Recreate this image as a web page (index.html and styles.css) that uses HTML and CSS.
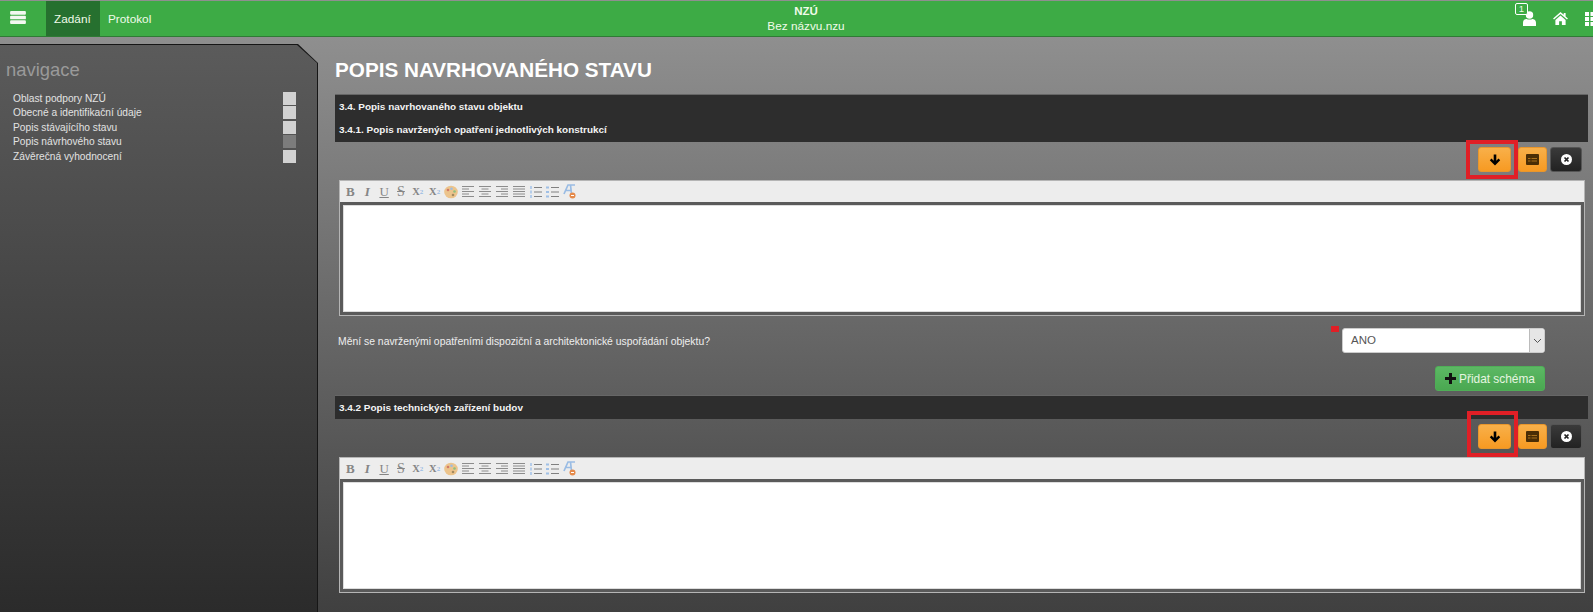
FILE: index.html
```html
<!DOCTYPE html>
<html lang="cs">
<head>
<meta charset="utf-8">
<title>NZÚ</title>
<link rel="stylesheet" href="styles.css">
</head>
<body>
<svg class="sprite" aria-hidden="true">
  <symbol id="i-arrow" viewBox="0 0 12 12"><path d="M6 11.500.8 6.300l1.700-1.700L4.700 6.800V.5h2.600v6.300l2.200-2.200 1.700 1.700z"/></symbol>
  <symbol id="i-table" viewBox="0 0 13 11"><path d="M1 0h11a1 1 0 0 1 1 1v9a1 1 0 0 1-1 1H1a1 1 0 0 1-1-1V1a1 1 0 0 1 1-1z" fill="#4a2d05"/><path d="M2 4.500h2.500M5.500 4.500H11M2 7h2.500M5.500 7H11" stroke="#a8701c"/></symbol>
  <symbol id="i-close" viewBox="0 0 11 11"><circle cx="5.500" cy="5.500" r="5.500" fill="#fff"/><path d="m3.500 3.500 4 4m0-4-4 4" stroke="#222" stroke-width="1.700"/></symbol>
  <symbol id="i-palette" viewBox="0 0 14 14"><ellipse cx="7" cy="7" rx="6.800" ry="6.300" fill="#ecc48c"/><circle cx="4" cy="5" r="1.300" fill="#d27a68"/><circle cx="7.500" cy="3.800" r="1.300" fill="#9dbde2"/><circle cx="10.500" cy="6.500" r="1.300" fill="#8fc080"/><circle cx="9" cy="10" r="1.300" fill="#a38a60"/></symbol>
  <symbol id="i-left" viewBox="0 0 12 11"><path d="M0 .5h12M0 3h7M0 5.500h12M0 8h7M0 10.500h12" stroke="#8c8c8c"/></symbol>
  <symbol id="i-center" viewBox="0 0 12 11"><path d="M0 .5h12M2.500 3h7M0 5.500h12M2.500 8h7M0 10.500h12" stroke="#8c8c8c"/></symbol>
  <symbol id="i-right" viewBox="0 0 12 11"><path d="M0 .5h12M5 3h7M0 5.500h12M5 8h7M0 10.500h12" stroke="#8c8c8c"/></symbol>
  <symbol id="i-justify" viewBox="0 0 12 11"><path d="M0 .5h12M0 3h12M0 5.500h12M0 8h12M0 10.500h12" stroke="#8c8c8c"/></symbol>
  <symbol id="i-ol" viewBox="0 0 13 12"><path d="M5 1.500h8M5 6h8M5 10.500h8" stroke="#808080"/><path d="M1 0h2v3H1zM1 4.500h2v3H1zM1 9h2v3H1z" fill="#b5cdea"/></symbol>
  <symbol id="i-ul" viewBox="0 0 13 12"><path d="M5 1.500h8M5 6h8M5 10.500h8" stroke="#808080"/><path d="M0 .5h3v2H0zM0 5h3v2H0zM0 9.500h3v2H0z" fill="#a0c0e6"/></symbol>
  <symbol id="i-format" viewBox="0 0 14 15"><path d="M2 10 6 1h2.500l1 9M3.500 6.500h6M7 1h6" stroke="#9abce4" stroke-width="1.700" fill="none"/><circle cx="10.500" cy="11.500" r="3" fill="#e58a4a"/><path d="M9 11.500h3" stroke="#fff"/></symbol>
</svg>

<header class="topbar">
  <div class="top-left">
    <button class="burger" aria-label="Menu"><svg width="16" height="13" viewBox="0 0 17 14"><path d="M1 0h15a1 1 0 0 1 1 1v2a1 1 0 0 1-1 1H1a1 1 0 0 1-1-1V1a1 1 0 0 1 1-1zM1 5h15a1 1 0 0 1 1 1v2a1 1 0 0 1-1 1H1a1 1 0 0 1-1-1V6a1 1 0 0 1 1-1zM1 10h15a1 1 0 0 1 1 1v2a1 1 0 0 1-1 1H1a1 1 0 0 1-1-1v-2a1 1 0 0 1 1-1z" fill="#f2f8f0"/></svg></button>
    <a class="tab tab-active">Zadání</a>
    <a class="tab">Protokol</a>
  </div>
  <div class="top-center"><strong>NZÚ</strong><span>Bez názvu.nzu</span></div>
  <div class="top-right">
    <div class="user">
      <span class="user-badge">1</span>
      <svg width="13" height="15" viewBox="0 0 14 16"><circle cx="7" cy="4.200" r="4" fill="#fff"/><path d="M0 16v-3.500C0 9.500 2.500 8.500 4 8.500c1 .8 5 .8 6 0 1.500 0 4 1 4 4V16z" fill="#fff"/></svg>
    </div>
    <svg class="home" width="15" height="13" viewBox="0 0 16 14"><path d="M8 0 0 7l1 1.200L8 2.200l7 6L16 7l-2.500-2.200V1h-2v2L8 0zM2.500 8.500V14H6.500v-4h3v4h4V8.500L8 3.700z" fill="#fff"/></svg>
    <svg class="apps" width="15" height="14" viewBox="0 0 15 14"><path d="M0 0h4v4H0zM5.500 0h4v4h-4zM11 0h4v4h-4zM0 5h4v4H0zM5.500 5h4v4h-4zM11 5h4v4h-4zM0 10h4v4H0zM5.500 10h4v4h-4zM11 10h4v4h-4z" fill="#fff"/></svg>
  </div>
</header>

<div class="page">
  <aside class="sidebar">
    <div class="sidebar-inner">
      <h2 class="nav-title">navigace</h2>
      <ul class="nav-list">
        <li><span>Oblast podpory NZÚ</span><i class="nav-box"></i></li>
        <li><span>Obecné a identifikační údaje</span><i class="nav-box"></i></li>
        <li><span>Popis stávajícího stavu</span><i class="nav-box"></i></li>
        <li><span>Popis návrhového stavu</span><i class="nav-box nav-box-current"></i></li>
        <li><span>Závěrečná vyhodnocení</span><i class="nav-box"></i></li>
      </ul>
    </div>
  </aside>

  <main class="content">
    <h1 class="page-title">POPIS NAVRHOVANÉHO STAVU</h1>

    <section class="panel">
      <h3>3.4. Popis navrhovaného stavu objektu</h3>
      <h3>3.4.1. Popis navržených opatření jednotlivých konstrukcí</h3>
    </section>

    <div class="actions">
      <div class="framed">
        <button class="btn btn-orange btn-arrow"><svg width="12" height="12"><use href="#i-arrow"/></svg></button>
      </div>
      <button class="btn btn-orange btn-table"><svg width="13" height="11"><use href="#i-table"/></svg></button>
      <button class="btn btn-black"><svg width="11" height="11"><use href="#i-close"/></svg></button>
    </div>

    <div class="editor">
      <div class="toolbar">
        <span class="t t-b">B</span><span class="t t-i">I</span><span class="t t-u">U</span><span class="t t-s">S</span>
        <span class="t t-x">X<sub>2</sub></span><span class="t t-x">X<sup>2</sup></span>
        <span class="t"><svg width="14" height="14"><use href="#i-palette"/></svg></span>
        <span class="t"><svg width="12" height="11"><use href="#i-left"/></svg></span>
        <span class="t"><svg width="12" height="11"><use href="#i-center"/></svg></span>
        <span class="t"><svg width="12" height="11"><use href="#i-right"/></svg></span>
        <span class="t"><svg width="12" height="11"><use href="#i-justify"/></svg></span>
        <span class="t"><svg width="13" height="12"><use href="#i-ol"/></svg></span>
        <span class="t"><svg width="13" height="12"><use href="#i-ul"/></svg></span>
        <span class="t"><svg width="14" height="15"><use href="#i-format"/></svg></span>
      </div>
      <div class="edit-area"></div>
    </div>

    <div class="question">
      <label>Mění se navrženými opatřeními dispoziční a architektonické uspořádání objektu?</label>
      <div class="select-wrap">
        <i class="required"></i>
        <div class="select"><span>ANO</span><b><svg width="9" height="6" viewBox="0 0 9 6"><path d="m1 1 3.500 3.500L8 1" stroke="#555" fill="none"/></svg></b></div>
      </div>
    </div>

    <div class="add-row">
      <button class="btn-add"><svg width="11" height="11" viewBox="0 0 11 11"><path d="M4 0h3v4h4v3H7v4H4V7H0V4h4z" fill="#111"/></svg> Přidat schéma</button>
    </div>

    <section class="panel panel-second">
      <h3>3.4.2 Popis technických zařízení budov</h3>
    </section>

    <div class="actions">
      <div class="framed framed-tall">
        <button class="btn btn-orange btn-arrow"><svg width="12" height="12"><use href="#i-arrow"/></svg></button>
      </div>
      <button class="btn btn-orange btn-table"><svg width="13" height="11"><use href="#i-table"/></svg></button>
      <button class="btn btn-black"><svg width="11" height="11"><use href="#i-close"/></svg></button>
    </div>

    <div class="editor">
      <div class="toolbar">
        <span class="t t-b">B</span><span class="t t-i">I</span><span class="t t-u">U</span><span class="t t-s">S</span>
        <span class="t t-x">X<sub>2</sub></span><span class="t t-x">X<sup>2</sup></span>
        <span class="t"><svg width="14" height="14"><use href="#i-palette"/></svg></span>
        <span class="t"><svg width="12" height="11"><use href="#i-left"/></svg></span>
        <span class="t"><svg width="12" height="11"><use href="#i-center"/></svg></span>
        <span class="t"><svg width="12" height="11"><use href="#i-right"/></svg></span>
        <span class="t"><svg width="12" height="11"><use href="#i-justify"/></svg></span>
        <span class="t"><svg width="13" height="12"><use href="#i-ol"/></svg></span>
        <span class="t"><svg width="13" height="12"><use href="#i-ul"/></svg></span>
        <span class="t"><svg width="14" height="15"><use href="#i-format"/></svg></span>
      </div>
      <div class="edit-area"></div>
    </div>
  </main>
</div>
</body>
</html>
```
FILE: styles.css
```css
* { box-sizing: border-box; }
html, body { margin: 0; height: 612px; overflow: hidden; }
body {
  font-family: "Liberation Sans", Arial, sans-serif;
  background: linear-gradient(#8f8f8f 36px, #404040 612px);
  color: #fff;
}
.sprite { display: none; }
.topbar {
  width: 1635px;
  height: 36px;
  margin-top: 1px;
  display: flex;
  background: #3dab45;
  border-bottom: 1px solid #2f7a35;
  color: #f0fbe9;
}
.top-left { width: 706px; flex: none; display: flex; }
.burger { width: 46px; padding: 0 0 0 10px; border: 0; background: none; text-align: left; }
.tab { display: flex; align-items: center; padding: 0 9px 0 8px; font-size: 11.800px; }
.tab-active { background: #26702f; width: 54px; }
.top-center { width: 200px; display: flex; flex-direction: column; align-items: center; padding-top: 3px; font-size: 11.800px; line-height: 15px; }
.top-center strong { font-size: 11.500px; }
.top-right { flex: 1; display: flex; justify-content: flex-end; align-items: flex-start; padding-right: 35px; }
.user { position: relative; margin: 10px 17px 0 0; height: 15px; }
.user-badge {
  position: absolute; left: -8px; top: -8px; width: 13px; height: 12px;
  border: 1px solid #fff; border-radius: 2px; background: #3dab45;
  font-size: 9.500px; line-height: 10px; text-align: center;
}
.home { margin: 11px 17px 0 0; }
.apps { margin-top: 11px; }

.page { display: flex; padding-top: 7px; }
.sidebar {
  width: 318px;
  height: 568px;
  flex: none;
  background: #161616;
  clip-path: polygon(0 0, 298px 0, 318px 19px, 318px 100%, 0 100%);
}
.sidebar-inner {
  height: 100%;
  padding: 15px 0 0 6px;
  background: linear-gradient(#5b5b5b, #2b2b2b);
  clip-path: polygon(0 1px, 297px 1px, 317px 19px, 317px 100%, 0 100%);
}
.nav-title { margin: 0 0 11px; font-size: 18.400px; line-height: 21px; font-weight: 400; color: #9a9a9a; }
.nav-list { margin: 0; padding: 0 0 0 7px; list-style: none; width: 290px; }
.nav-list li { display: flex; justify-content: space-between; align-items: center; height: 14.500px; font-size: 10.200px; color: #e2e2e2; }
.nav-box { width: 13px; height: 13px; background: #d2d2d2; }
.nav-box-current { background: #7c7c7c; }

.content { flex: 1; padding: 0 5px 0 17px; min-width: 0; }
.page-title { margin: 14px 0 0; height: 37px; font-size: 20.700px; line-height: 24px; font-weight: 700; color: #fff; }
.panel { background: #2d2d2d; padding: 0 4px; height: 47px; box-shadow: 0 -1px 0 #666; }
.panel h3 { margin: 0; height: 23px; font-size: 9.950px; line-height: 23px; font-weight: 700; color: #f4f4f4; }
.panel-second { height: 23px; margin-top: 5px; }

.actions { display: flex; justify-content: flex-end; gap: 3px; padding: 5px 6px 0 0; height: 38px; }
.framed { position: relative; display: flex; margin-right: 4px; height: 25px; }
.framed::after {
  content: ""; position: absolute; left: -12px; right: -7px; top: -7px; bottom: -7px;
  border: 4px solid #e01f26; pointer-events: none;
}
.framed-tall::after { left: -11px; top: -13px; bottom: -8px; }
.btn { height: 25px; border: 1px solid transparent; border-radius: 3px; padding: 0; display: flex; align-items: center; justify-content: center; }
.btn-orange { background: linear-gradient(#f8b04a, #f79a22); border-color: #e8962c; }
.btn-arrow { width: 33px; }
.btn-table { width: 29px; }
.btn-black { width: 32px; background: linear-gradient(#3a3a3a, #222); border-color: #555; }

.editor { margin: 0 3px 0 4px; height: 136px; display: flex; flex-direction: column; border: 1px solid #b5b5b5; background: #ededed; }
.toolbar { height: 21px; display: flex; align-items: center; padding-left: 2px; flex: none; }
.t { width: 16.850px; display: flex; justify-content: center; align-items: center; font-family: "Liberation Serif", serif; font-weight: 700; font-size: 13px; color: #858585; }
.t-i { font-style: italic; }
.t-u { text-decoration: underline; font-weight: 400; }
.t-s { text-decoration: line-through; font-weight: 400; font-size: 14px; }
.t-x { font-size: 10.500px; }
.t-x sub, .t-x sup { font-size: 7px; color: #9abce4; line-height: 0; }
.edit-area { flex: 1; background: #fff; border: 3px solid #5a5a5a; box-shadow: inset 0 0 0 1px #ddd; }

.question { display: flex; justify-content: space-between; align-items: center; padding: 12px 43px 0 3px; height: 37px; font-size: 10.400px; color: #eee; }
.question label { padding-top: 2px; }
.select-wrap { position: relative; }
.required { position: absolute; left: -11px; top: -2px; width: 8px; height: 6px; background: #e01f26; }
.select { width: 203px; height: 25px; display: flex; background: #fff; border-radius: 3px; color: #555; font-size: 11.500px; line-height: 23px; overflow: hidden; border: 1px solid #ccc; }
.select span { flex: 1; padding-left: 8px; }
.select b { width: 15px; display: flex; align-items: center; justify-content: center; background: #e6e6e6; border-left: 1px solid #bbb; }

.add-row { display: flex; justify-content: flex-end; padding: 13px 43px 0 0; }
.btn-add {
  width: 110px; height: 25px; padding: 0; border: 1px solid #4fae57; border-radius: 3px;
  background: linear-gradient(#5cb864, #4aa851); color: #e6f5e0;
  font: 11.900px "Liberation Sans", Arial, sans-serif;
  display: flex; align-items: center; justify-content: center; gap: 3px;
}
```
